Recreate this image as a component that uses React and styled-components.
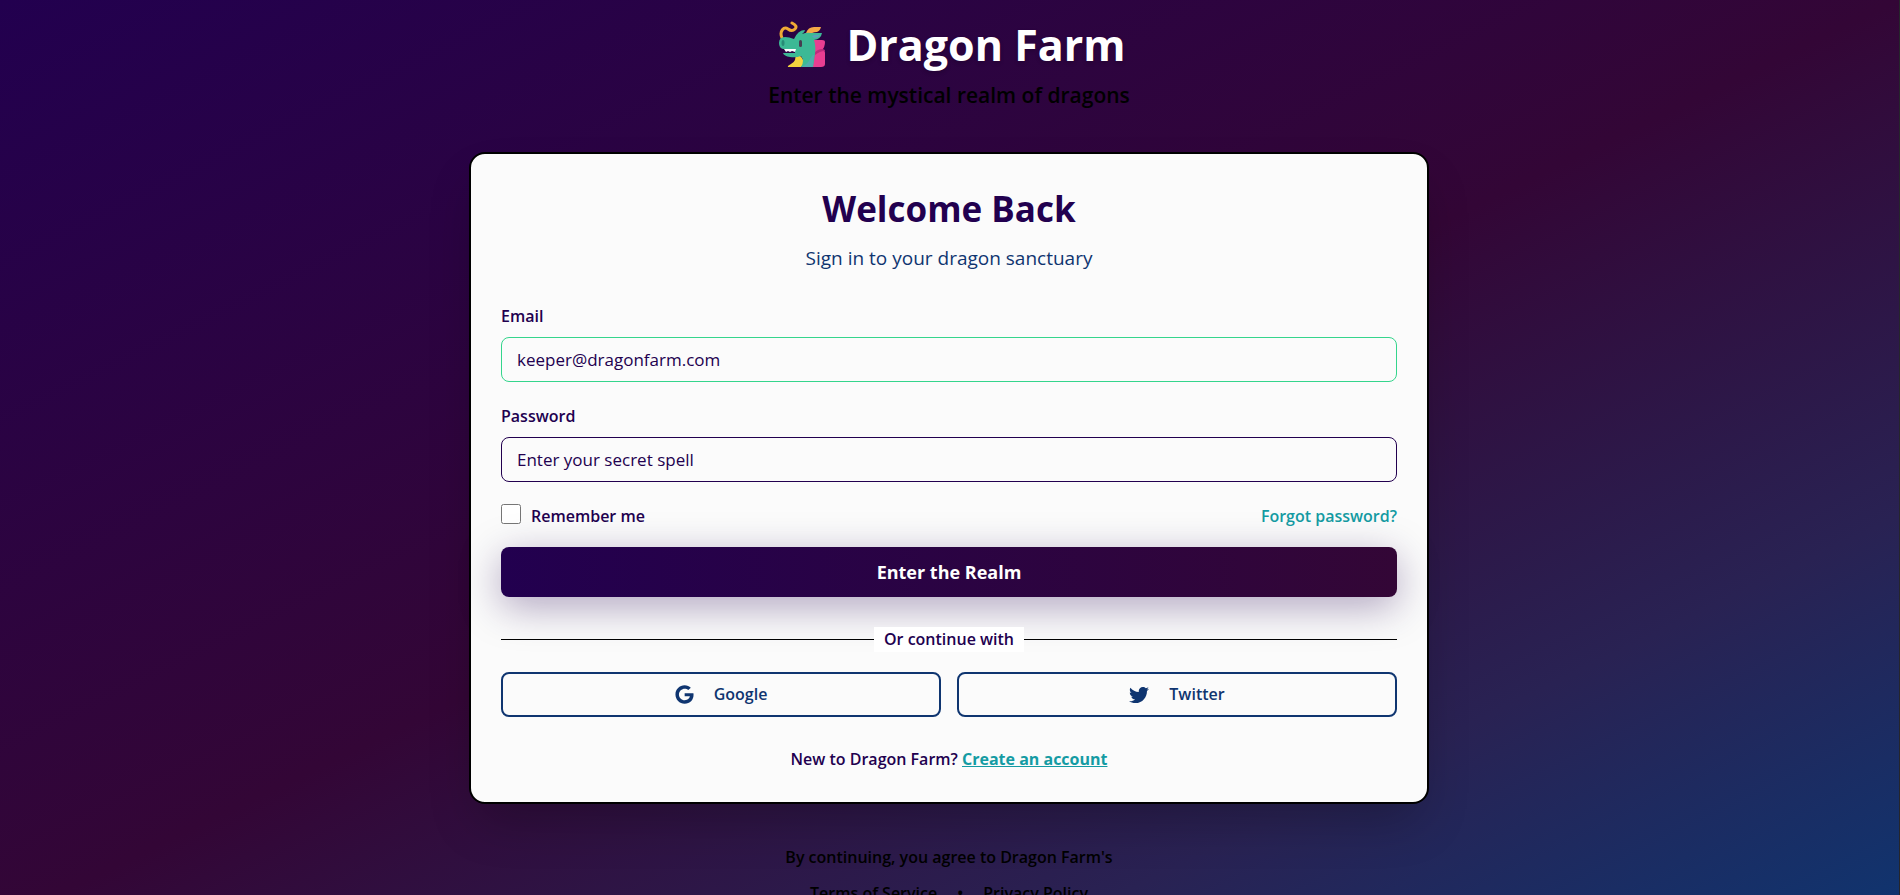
import React from "react";
import styled, { createGlobalStyle } from "styled-components";
import { FaGoogle, FaTwitter } from "react-icons/fa";

const colors = {
  indigo: "#22004f",
  plum: "#330636",
  dusk: "#292253",
  navy: "#0f3570",
  teal: "#149ba3",
  green: "#34d58c",
  paper: "#fbfbfb",
};

const GlobalStyle = createGlobalStyle`
  *, *::before, *::after { box-sizing: border-box; }
  body {
    margin: 0;
    font-family: "Open Sans", "Noto Sans", sans-serif;
    font-size: 16px;
    line-height: 25px;
    color: #000;
  }
  h1, h2, p { margin: 0; }
  button, input { font: inherit; }
`;

const Page = styled.div`
  min-height: 100vh;
  display: flex;
  flex-direction: column;
  align-items: center;
  padding: 15px 17px 16px 16px;
  border-right: 1px solid #26262b;
  background: linear-gradient(
    to bottom right,
    ${colors.indigo},
    ${colors.plum} 50%,
    ${colors.dusk} 78%,
    ${colors.navy}
  );
`;

const Header = styled.header`
  display: flex;
  flex-direction: column;
  align-items: center;
  gap: 4px;
  margin-bottom: 41px;
`;

const Brand = styled.div`
  display: flex;
  align-items: center;
  gap: 20px;
  padding-left: 6px;
`;

const DragonIcon = styled.svg`
  width: 48px;
  height: 48px;
`;

const BrandName = styled.h1`
  font-size: 43px;
  line-height: 60px;
  font-weight: 700;
  color: #fff;
  text-shadow: 0 2px 4px rgba(0, 0, 0, 0.2);
`;

const Tagline = styled.p`
  font-size: 21px;
  line-height: 32px;
  font-weight: 600;
`;

const Card = styled.main`
  width: 100%;
  max-width: 960px;
  padding: 30px;
  border: 2px solid #000;
  border-radius: 16px;
  background: ${colors.paper};
  color: ${colors.indigo};
  box-shadow: 0 25px 50px -12px rgba(0, 0, 0, 0.25);
`;

const CardHeader = styled.div`
  display: flex;
  flex-direction: column;
  align-items: center;
  gap: 10px;
  margin-bottom: 32px;
`;

const Title = styled.h2`
  font-size: 35px;
  line-height: 50px;
  font-weight: 700;
`;

const Subtitle = styled.p`
  font-size: 19px;
  line-height: 28px;
  color: ${colors.navy};
`;

const Form = styled.form`
  display: flex;
  flex-direction: column;
`;

const Field = styled.div`
  display: flex;
  flex-direction: column;
  gap: 8px;
  margin-bottom: 22px;
`;

const Label = styled.label`
  font-weight: 600;
`;

const Input = styled.input`
  height: 45px;
  padding: 0 15px;
  border: 1px solid ${(p) => (p.$active ? colors.green : colors.indigo)};
  border-radius: 8px;
  background: transparent;
  color: ${colors.indigo};
  font-size: 17px;
  outline: none;
  &::placeholder { color: ${colors.indigo}; opacity: 1; }
`;

const Options = styled.div`
  display: flex;
  justify-content: space-between;
  margin-bottom: 18px;
`;

const Remember = styled.div`
  display: flex;
  align-items: flex-start;
  gap: 10px;
`;

const Checkbox = styled.input`
  width: 20px;
  height: 20px;
  margin: 0;
`;

const Link = styled.a`
  color: ${colors.teal};
  font-weight: ${(p) => (p.$underlined ? 700 : 600)};
  text-decoration: ${(p) => (p.$underlined ? "underline" : "none")};
`;

const Submit = styled.button`
  height: 50px;
  border: 0;
  border-radius: 8px;
  background: linear-gradient(to right, ${colors.indigo}, ${colors.plum});
  box-shadow: 0 10px 40px rgba(34, 0, 79, 0.35);
  color: #fff;
  font-size: 18px;
  font-weight: 700;
`;

const Divider = styled.div`
  display: flex;
  align-items: center;
  margin: 30px 0 20px;
  &::before, &::after {
    content: "";
    flex: 1;
    height: 1px;
    background: #000;
  }
`;

const DividerText = styled.span`
  padding: 0 10px;
  background: #fff;
  font-weight: 600;
`;

const Socials = styled.div`
  display: grid;
  grid-template-columns: 1fr 1fr;
  gap: 16px;
`;

const SocialButton = styled.button`
  display: flex;
  align-items: center;
  justify-content: center;
  gap: 20px;
  height: 45px;
  border: 2px solid ${colors.navy};
  border-radius: 8px;
  background: transparent;
  color: ${colors.navy};
  font-weight: 600;
`;

const Signup = styled.p`
  margin-top: 30px;
  text-align: center;
  font-weight: 600;
`;

const Footer = styled.footer`
  margin-top: 41px;
  text-align: center;
  font-weight: 600;
`;

const LegalLinks = styled.nav`
  display: flex;
  justify-content: center;
  gap: 20px;
  margin-top: 11px;
`;

const LegalLink = styled.a`
  color: inherit;
  text-decoration: none;
`;

function Dragon() {
  return (
    <DragonIcon viewBox="0 0 48 48" aria-hidden="true">
      <path d="M35 19h9q3 0 3 2 0 5-3 8 3 0 3 3v11q0 3-4 3H33z" fill="#e83e91" />
      <path d="M36 32q4-4 8-4 3 0 3 2-5 0-10 4z" fill="#bd2c7d" />
      <path d="M28 12q2-6 8-6h7q-1 4-4 5-5 0-7 3z" fill="#f5a947" />
      <path d="M4 17C1 10 6 5 10 8q4 3 7 0t-3-6" fill="none" stroke="#f0aa35" strokeWidth="3" strokeLinecap="round" strokeLinejoin="round" />
      <path d="M17 33c10 2 10 11 6 13H10q-1-1 3-3 6-3 4-10z" fill="#f2d33f" />
      <path d="M16 18q4-9 11-9 0 2-3 4 5-2 9-1h11q-1 6-8 7 2 6 1 14l-2 13H23q4-6 0-11-5 2-11 1-6-1-7-4h12v-4H5q-4-1-4-6 0-6 6-6 4 0 9 2z" fill="#3cb995" />
      <path d="M23 46q7-3 9-8 3-5 4-4l-1 12z" fill="#4fadad" />
      <path d="M34 15q4-2 8-1-2 3-6 3z" fill="#5c9fbb" />
      <path d="M6 28h12l-1 3-3-1-2 1-2-1-2 1z" fill="#fff" />
      <rect x="21" y="19" width="3" height="7" rx="1.5" fill="#463d50" />
      <ellipse cx="5" cy="22" rx="1.5" ry="3" fill="#278b76" />
    </DragonIcon>
  );
}

export default function App() {
  return (
    <>
      <GlobalStyle />
      <Page>
        <Header>
          <Brand>
            <Dragon />
            <BrandName>Dragon Farm</BrandName>
          </Brand>
          <Tagline>Enter the mystical realm of dragons</Tagline>
        </Header>
        <Card>
          <CardHeader>
            <Title>Welcome Back</Title>
            <Subtitle>Sign in to your dragon sanctuary</Subtitle>
          </CardHeader>
          <Form onSubmit={(e) => e.preventDefault()}>
            <Field>
              <Label htmlFor="email">Email</Label>
              <Input id="email" type="email" placeholder="keeper@dragonfarm.com" $active />
            </Field>
            <Field>
              <Label htmlFor="password">Password</Label>
              <Input id="password" type="password" placeholder="Enter your secret spell" />
            </Field>
            <Options>
              <Remember>
                <Checkbox id="remember" type="checkbox" />
                <Label htmlFor="remember">Remember me</Label>
              </Remember>
              <Link href="#forgot">Forgot password?</Link>
            </Options>
            <Submit type="submit">Enter the Realm</Submit>
          </Form>
          <Divider>
            <DividerText>Or continue with</DividerText>
          </Divider>
          <Socials>
            <SocialButton type="button"><FaGoogle size={19} />Google</SocialButton>
            <SocialButton type="button"><FaTwitter size={20} />Twitter</SocialButton>
          </Socials>
          <Signup>
            New to Dragon Farm? <Link href="#signup" $underlined>Create an account</Link>
          </Signup>
        </Card>
        <Footer>
          <p>By continuing, you agree to Dragon Farm's</p>
          <LegalLinks>
            <LegalLink href="#terms">Terms of Service</LegalLink>
            <span>•</span>
            <LegalLink href="#privacy">Privacy Policy</LegalLink>
          </LegalLinks>
        </Footer>
      </Page>
    </>
  );
}
